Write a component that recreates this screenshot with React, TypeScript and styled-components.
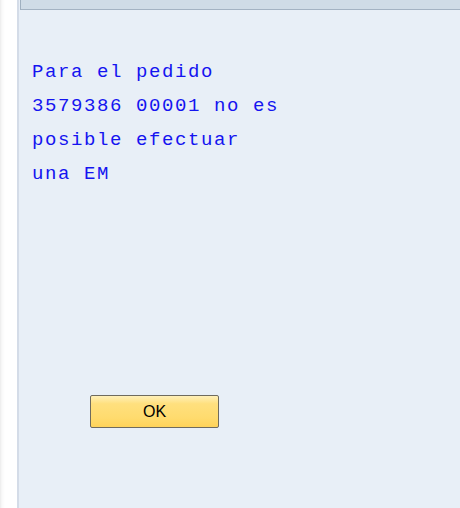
import styled, { createGlobalStyle } from 'styled-components'

const Global = createGlobalStyle`
  html, body {
    margin: 0;
    padding: 0;
    background: #ffffff;
  }
  #root {
    height: 508px;
  }
`

const Root = styled.div`
  display: flex;
  height: 508px;
  width: 460px;
  overflow: hidden;
`

const Gutter = styled.div`
  width: 17px;
  background: linear-gradient(to right, #ececec 0, #f9f9f9 2px, #ffffff 5px);
`

const Panel = styled.div`
  flex: 1;
  display: flex;
  flex-direction: column;
  border-left: 2px solid #d4dce8;
  background: #e8eff7;
`

const TitleBar = styled.div`
  height: 9px;
  background: #cfdce7;
  border-left: 1px solid #9fb0c0;
  border-bottom: 1px solid #a3b3c3;
  margin-left: 1px;
`

const Content = styled.div`
  display: flex;
  flex-direction: column;
  padding: 45px 0 0 13px;
`

const Message = styled.p`
  margin: 0;
  font-family: 'Courier New', 'Liberation Mono', monospace;
  font-size: 19px;
  letter-spacing: 1.6px;
  line-height: 34px;
  color: #1414f0;
  white-space: pre-line;
`

const Actions = styled.div`
  display: flex;
  padding: 204px 0 0 58px;
`

const Button = styled.button`
  width: 129px;
  height: 33px;
  padding: 0;
  border: 1px solid #6f6b5e;
  border-radius: 2px;
  background: linear-gradient(to bottom, #fff0b8 0, #ffe07e 25%, #ffdb6e 70%, #ffd35a 100%);
  font-family: 'Liberation Sans', Arial, sans-serif;
  font-size: 16px;
  color: #000000;
  cursor: pointer;
`

export default function App() {
  return (
    <Root>
      <Global />
      <Gutter />
      <Panel>
        <TitleBar />
        <Content>
          <Message>
            {'Para el pedido\n3579386 00001 no es\nposible efectuar\nuna EM'}
          </Message>
          <Actions>
            <Button>OK</Button>
          </Actions>
        </Content>
      </Panel>
    </Root>
  )
}
